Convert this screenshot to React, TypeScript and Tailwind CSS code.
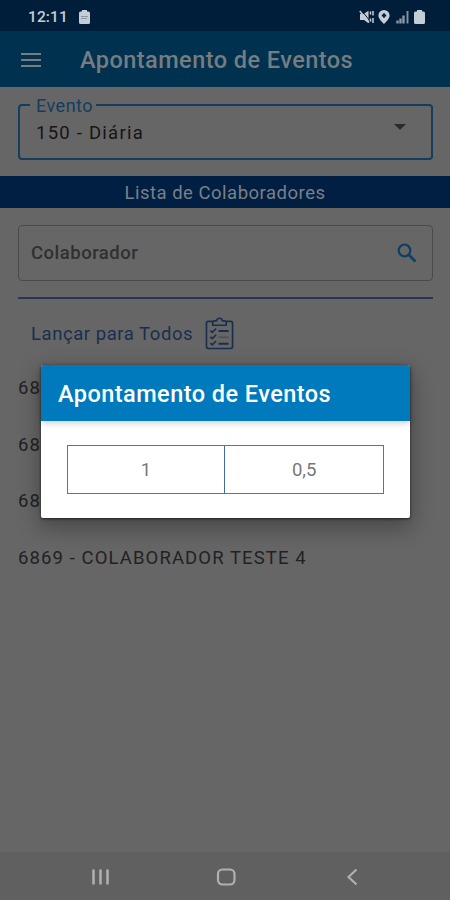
import React from "react";

const collaborators = ["68", "68", "68", "6869 - COLABORADOR TESTE 4"];

function StatusBar() {
  return (
    <div className="flex h-[31px] items-center justify-between bg-[#001d3a] pl-7 pr-[25px] pt-[2px] text-[#c5cdd6]">
      <div className="flex items-center gap-[11px]">
        <span className="pt-[2px] text-[15.5px] font-medium leading-none tracking-[0.1px]">12:11</span>
        <svg width="11" height="14" viewBox="0 0 11 14">
          <path d="M3 0h5v1.500h1.500Q11 1.500 11 3v9.500q0 1.500-1.500 1.500h-8Q0 14 0 12.500V3q0-1.500 1.500-1.500H3z" fill="currentColor" />
          <path d="M2 6.500h7M2 8.500h6" stroke="#8997a5" />
        </svg>
      </div>
      <div className="flex items-center">
        <svg width="16" height="14" viewBox="0 0 16 14">
          <path d="M1 4h3.500L9.500 .8v12.400L5 10H1z" fill="currentColor" />
          <path d="M2.500 .5l8 9.800" stroke="#001d3a" strokeWidth="1" />
          <path d="M.8 1l9.200 11.500" stroke="currentColor" strokeWidth="1.500" />
          <path d="M11.500 1.500v3M11.500 8.500v3M14 1v4.500M14 8v5" stroke="currentColor" strokeWidth="1.500" />
        </svg>
        <svg className="ml-[3px]" width="12" height="14" viewBox="0 0 12 14">
          <path d="M6 0a5.600 5.600 0 0 1 5.600 5.500C11.600 8.500 8 12 6 14 4 12 .4 8.500 .4 5.500A5.600 5.600 0 0 1 6 0z" fill="currentColor" />
          <path d="M6 3.300v4.400M3.800 5.500h4.400" stroke="#001d3a" strokeWidth="1.800" />
        </svg>
        <svg className="ml-[6px]" width="13" height="14" viewBox="0 0 13 14">
          <path d="M1.500 13.500v-3M4.500 13.500V8.500M7.500 13.500V5.500" stroke="#8b98a6" strokeWidth="2.400" />
          <path d="M11.500 13.500V1" stroke="#8593a1" strokeWidth="1.900" />
        </svg>
        <svg className="ml-[5px]" width="11" height="14" viewBox="0 0 11 14">
          <path d="M3 0h5v1.500h1.500Q11 1.500 11 3v9.500q0 1.500-1.500 1.500h-8Q0 14 0 12.500V3q0-1.500 1.500-1.500H3z" fill="currentColor" />
        </svg>
      </div>
    </div>
  );
}

function ChecklistIcon() {
  return (
    <svg width="29" height="33" viewBox="0 0 30 34" fill="none" stroke="#192f50" strokeWidth="1.700" strokeLinejoin="round">
      <path d="M8 4.500H3.500Q1.500 4.500 1.500 6.500v24q0 2 2 2h23q2 0 2-2v-24q0-2-2-2H22" />
      <path d="M8 8.500V6q0-2 2-2h2q.4-2.800 3-2.800T18 4h2q2 0 2 2v2.500z" />
      <path d="M5.500 14l2 1.800 4-4M5.500 20.500l2 1.800 4-4M5.500 27l2 1.800 4-4" />
      <path d="M14 14.500h10.500M14 27.500h10.500" strokeWidth="2.100" />
      <path d="M14 20.800h10.500" stroke="#454d58" strokeWidth="1.300" />
    </svg>
  );
}

function EventDialog() {
  return (
    <div className="absolute left-[40.5px] top-[365px] h-[153px] w-[369.5px] rounded-[2px] bg-white shadow-[0_8px_22px_2px_rgba(0,0,0,0.3),0_1px_3px_rgba(0,0,0,0.6)]">
      <div className="flex h-14 items-center rounded-t-[2px] bg-[#0079bd] pl-[17.5px] shadow-[0_2px_6px_rgba(0,0,0,0.2)]">
        <h2 className="whitespace-nowrap pt-[3px] text-[23.5px] font-medium leading-none tracking-[0.45px] text-white">Apontamento de Eventos</h2>
      </div>
      <div className="mx-[26px] mt-6 grid h-[49px] grid-cols-2 border border-[#5277a5] text-[18.500px] text-[#777]">
        <button className="border-r border-[#416d9e] pt-[3px]">1</button>
        <button className="pt-[3px]">0,5</button>
      </div>
    </div>
  );
}

export default function App() {
  return (
    <div className="relative flex h-[900px] w-[450px] flex-col overflow-hidden bg-[#666] font-['Roboto',sans-serif]">
      <StatusBar />
      <header className="flex h-14 items-center bg-[#00314e] pl-[21px] text-[#777c80]">
        <div className="flex w-5 flex-col gap-[4px] pt-px">
          <span className="h-[2px] bg-current" />
          <span className="h-[2px] bg-current" />
          <span className="h-[2px] bg-current" />
        </div>
        <h1 className="ml-[39px] whitespace-nowrap pt-[4px] text-[23.5px] font-medium leading-none tracking-[0.45px]">Apontamento de Eventos</h1>
      </header>
      <fieldset className="ml-[18px] mr-[17px] mt-[9px] h-[64px] rounded-[4px] border-2 border-[#123e5f] pl-[10px]">
        <legend className="pl-[6px] pr-[3px] text-[18px] leading-[18px] tracking-[0.500px] text-[#123e5f]">
          <span className="relative top-px">Evento</span>
        </legend>
        <div className="flex items-start justify-between pl-[6px] pr-[25px]">
          <span className="pt-[9px] text-[18.500px] leading-[20px] tracking-[1.25px] text-[#151515]">150 - Diária</span>
          <span className="mt-[10px] border-x-[6px] border-t-[6px] border-x-transparent border-t-[#2b2b2b]" />
        </div>
      </fieldset>
      <div className="mt-4 flex h-8 items-center justify-center bg-[#001f42] pt-[4px] text-[18.500px] tracking-[0.5px] text-[#7b8087]">Lista de Colaboradores</div>
      <div className="ml-[18px] mr-[17px] mt-[17px] flex h-[56px] items-center justify-between rounded-[4px] border border-[#4a4a4a] pl-3 pr-[14px]">
        <span className="pt-[2px] text-[18.500px] font-medium tracking-[0.5px] text-[#303030]">Colaborador</span>
        <svg width="22" height="22" viewBox="0 0 22 22" fill="none" stroke="#0d4163">
          <circle cx="8.500" cy="8.500" r="5.800" strokeWidth="2.200" />
          <path d="M13 13l6.500 6.500" strokeWidth="2.700" />
        </svg>
      </div>
      <div className="ml-[18px] mr-[17px] mt-4 h-[2px] bg-[#2a3555]" />
      <div className="ml-[31px] mt-[17px] flex h-[34px] items-center gap-[12px]">
        <span className="pt-[3px] text-[18.500px] tracking-[0.550px] text-[#192f50]">Lançar para Todos</span>
        <ChecklistIcon />
      </div>
      <ul className="ml-[18px] mt-[11px] text-[18.500px] tracking-[1.1px] text-[#222]">
        {collaborators.map((name, index) => (
          <li key={index} className="flex h-[56.500px] items-center whitespace-nowrap">{name}</li>
        ))}
      </ul>
      <nav className="mt-auto h-12 bg-[#606060]">
        <svg width="450" height="48" viewBox="0 0 450 48" fill="none" stroke="#b0b0b0" strokeWidth="2.200">
          <path d="M93.500 17.500v15M100.500 17.500v15M107.500 17.500v15" strokeWidth="2.500" />
          <rect x="218" y="17.500" width="16.500" height="15" rx="4.500" />
          <path d="M356.500 17.500l-8 7.500 8 7.500" />
        </svg>
      </nav>
      <EventDialog />
    </div>
  );
}
